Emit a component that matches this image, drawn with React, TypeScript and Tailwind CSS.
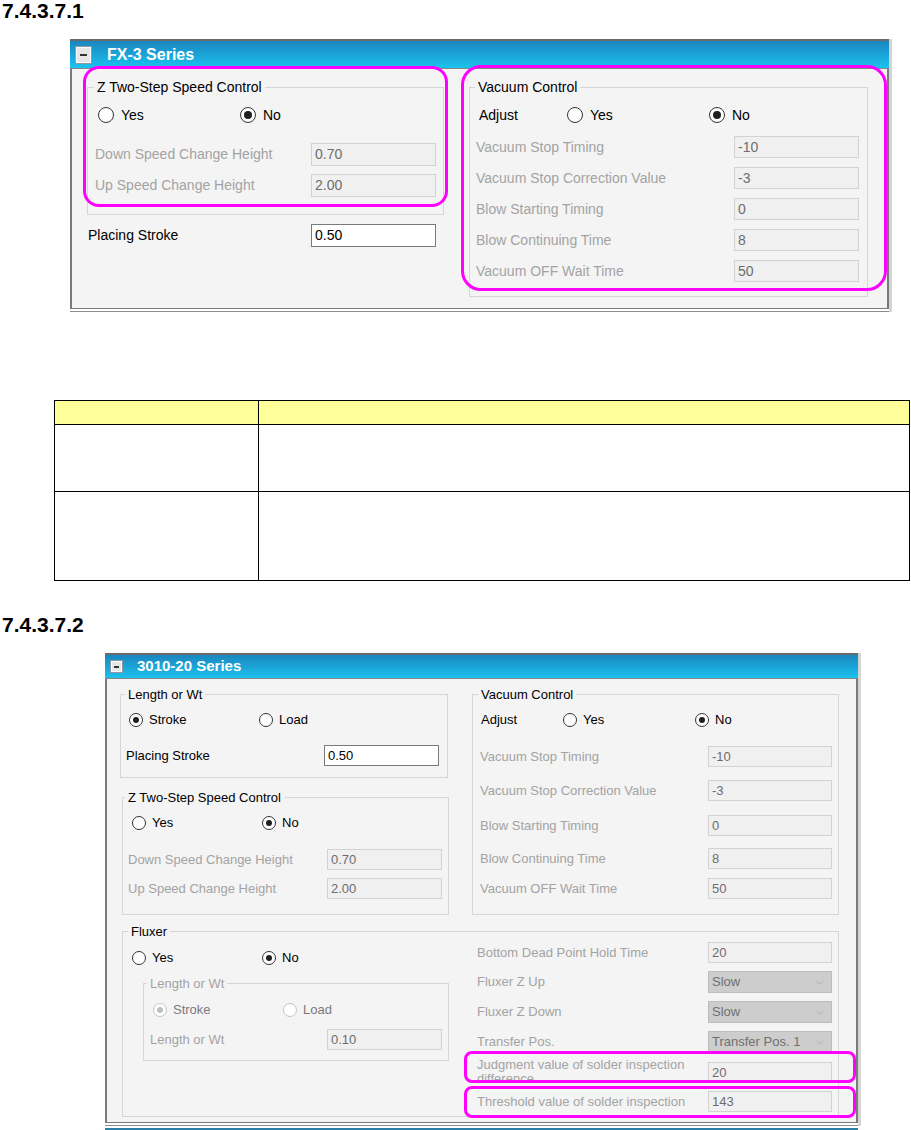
import { ChevronDown } from 'lucide-react'

const GRAY = 'text-[#a3a3a3]'

function Radio({ checked, small, disabled }: { checked?: boolean; small?: boolean; disabled?: boolean }) {
  const ring = small ? 'w-[14px] h-[14px]' : 'w-[16px] h-[16px]'
  const dot = small ? 'w-[6px] h-[6px]' : 'w-[8px] h-[8px]'
  return (
    <span className={`${ring} ${disabled ? 'border-[#c4c4c4]' : 'border-[#333]'} flex shrink-0 items-center justify-center rounded-full border bg-white`}>
      {checked && <span className={`${dot} rounded-full ${disabled ? 'bg-[#bdbdbd]' : 'bg-[#1f1f1f]'}`} />}
    </span>
  )
}

function Opt({ label, checked, small, disabled, cls, labelCls }: { label: string; checked?: boolean; small?: boolean; disabled?: boolean; cls?: string; labelCls?: string }) {
  return (
    <div className={`flex items-center ${small ? 'gap-[6px]' : 'gap-[7px]'} ${cls ?? ''}`}>
      <Radio checked={checked} small={small} disabled={disabled} />
      <span className={labelCls}>{label}</span>
    </div>
  )
}

function Box({ v, cls, on }: { v: string; cls: string; on?: boolean }) {
  return (
    <div className={`${cls} flex shrink-0 items-center border pl-[3px] ${on ? 'border-[#7a7a7a] bg-white text-black' : 'border-[#d2d2d2] bg-[#f0f0f0] text-[#6d6d6d]'}`}>
      {v}
    </div>
  )
}

function Sel({ v }: { v: string }) {
  return (
    <div className="flex h-[22px] w-[124px] shrink-0 items-center justify-between border border-[#bdbdbd] bg-[#cdcdcd] pl-[3px] pr-[5px] text-[#707070]">
      <span className="whitespace-nowrap">{v}</span>
      <ChevronDown size={13} strokeWidth={1} className="text-[#9a9a9a]" />
    </div>
  )
}

function Minus({ small }: { small?: boolean }) {
  return (
    <div className={`${small ? 'ml-[5px] h-[13px] w-[13px]' : 'ml-[5px] h-[18px] w-[17px]'} flex items-center justify-center border border-[#8c9aa3] bg-[#e6e6e6] shadow-[inset_0_0_0_1px_#fafafa]`}>
      <span className={`${small ? 'w-[5px]' : 'w-[7px]'} h-[2px] bg-[#333]`} />
    </div>
  )
}

function Panel1() {
  const vac = [
    ['Vacuum Stop Timing', '-10', 'mt-[13px]'],
    ['Vacuum Stop Correction Value', '-3', 'mt-[9px]'],
    ['Blow Starting Timing', '0', 'mt-[9px]'],
    ['Blow Continuing Time', '8', 'mt-[9px]'],
    ['Vacuum OFF Wait Time', '50', 'mt-[9px]'],
  ]
  return (
    <div className="ml-[70px] mt-[17px] flex w-[822px]">
      <div className="relative w-[819px] border-b border-[#8f8f8f] pb-[2px]">
        <div className="flex h-[30px] items-center border-t-2 border-b border-t-[#6b6b6b] border-b-[#858585] bg-linear-to-b from-[#1a86bf] to-[#1cc2ef]">
          <Minus />
          <span className="ml-[15px] text-[16px] font-bold text-white">FX-3 Series</span>
        </div>
        <div className="flex h-[240px] items-start border-x-2 border-b border-[#7a7a7a] bg-[#f4f4f4] pt-[10px] text-[14px] text-black">
          <div className="w-[372px] shrink-0">
            <fieldset className="ml-[15px] w-[357px] border border-[#d6d6d6] pb-[17px]">
              <legend className="ml-[6px] px-[3px] leading-[16px]">Z Two-Step Speed Control</legend>
              <div className="mt-[12px] flex h-[16px] items-center pl-[10px] leading-[16px]">
                <Opt label="Yes" cls="w-[142px]" />
                <Opt label="No" checked />
              </div>
              <div className="mt-[20px] flex h-[23px] items-center pl-[7px]">
                <span className={`w-[216px] ${GRAY}`}>Down Speed Change Height</span>
                <Box v="0.70" cls="h-[23px] w-[125px]" />
              </div>
              <div className="mt-[8px] flex h-[23px] items-center pl-[7px]">
                <span className={`w-[216px] ${GRAY}`}>Up Speed Change Height</span>
                <Box v="2.00" cls="h-[23px] w-[125px]" />
              </div>
            </fieldset>
            <div className="ml-[16px] mt-[9px] flex h-[23px] items-center">
              <span className="w-[223px]">Placing Stroke</span>
              <Box v="0.50" cls="h-[23px] w-[125px]" on />
            </div>
          </div>
          <fieldset className="ml-[25px] w-[399px] border border-[#d6d6d6] pb-[14px]">
            <legend className="ml-[5px] px-[3px] leading-[16px]">Vacuum Control</legend>
            <div className="mt-[12px] flex h-[16px] items-center pl-[9px]">
              <span className="w-[88px]">Adjust</span>
              <Opt label="Yes" cls="w-[142px]" />
              <Opt label="No" checked />
            </div>
            {vac.map(([l, v, mt]) => (
              <div key={l} className={`${mt} flex h-[22px] items-center pl-[6px]`}>
                <span className={`w-[258px] ${GRAY}`}>{l}</span>
                <Box v={v} cls="h-[22px] w-[125px]" />
              </div>
            ))}
          </fieldset>
        </div>
        <div className="pointer-events-none absolute left-[13px] top-[27px] h-[141px] w-[365px] rounded-[16px] border-[3px] border-[#ff00ff]" />
        <div className="pointer-events-none absolute left-[391px] top-[26px] h-[226px] w-[426px] rounded-[20px] border-[3px] border-[#ff00ff]" />
      </div>
      <div className="w-[3px] bg-[#d4d4d4]" />
    </div>
  )
}

function Panel2() {
  const vac = [
    ['Vacuum Stop Timing', '-10', 'mt-[19px]'],
    ['Vacuum Stop Correction Value', '-3', 'mt-[13px]'],
    ['Blow Starting Timing', '0', 'mt-[14px]'],
    ['Blow Continuing Time', '8', 'mt-[12px]'],
    ['Vacuum OFF Wait Time', '50', 'mt-[9px]'],
  ]
  return (
    <div className="ml-[105px] mt-[17px] flex w-[756px]">
      <div className="relative w-[753px] border-b border-[#8f8f8f] pb-[2px]">
        <div className="flex h-[26px] items-center border-t-2 border-b border-t-[#6b6b6b] border-b-[#858585] bg-linear-to-b from-[#1a86bf] to-[#1cc2ef]">
          <Minus small />
          <span className="ml-[14px] text-[15px] font-bold text-white">3010-20 Series</span>
        </div>
        <div className="h-[444px] border-x-2 border-b border-[#7a7a7a] bg-[#f4f4f4] pt-[8px] text-[13px] text-black">
          <div className="flex items-start">
            <div className="w-[342px] shrink-0">
              <fieldset className="ml-[13px] w-[328px] border border-[#d6d6d6] pb-[11px]">
                <legend className="ml-[4px] px-[3px] leading-[15px]">Length or Wt</legend>
                <div className="mt-[11px] flex h-[14px] items-center pl-[8px]">
                  <Opt label="Stroke" checked small cls="w-[130px]" />
                  <Opt label="Load" small />
                </div>
                <div className="mt-[18px] flex h-[21px] items-center pl-[5px]">
                  <span className="w-[198px]">Placing Stroke</span>
                  <Box v="0.50" cls="h-[21px] w-[115px]" on />
                </div>
              </fieldset>
              <fieldset className="ml-[15px] mt-[12px] w-[327px] border border-[#d6d6d6] pb-[15px]">
                <legend className="ml-[2px] px-[3px] leading-[15px]">Z Two-Step Speed Control</legend>
                <div className="mt-[11px] flex h-[14px] items-center pl-[9px]">
                  <Opt label="Yes" small cls="w-[130px]" />
                  <Opt label="No" checked small />
                </div>
                <div className="mt-[19px] flex h-[21px] items-center pl-[5px]">
                  <span className={`w-[199px] ${GRAY}`}>Down Speed Change Height</span>
                  <Box v="0.70" cls="h-[21px] w-[115px]" />
                </div>
                <div className="mt-[8px] flex h-[21px] items-center pl-[5px]">
                  <span className={`w-[199px] ${GRAY}`}>Up Speed Change Height</span>
                  <Box v="2.00" cls="h-[21px] w-[115px]" />
                </div>
              </fieldset>
            </div>
            <fieldset className="ml-[23px] w-[367px] border border-[#d6d6d6] pb-[15px]">
              <legend className="ml-[5px] px-[3px] leading-[15px]">Vacuum Control</legend>
              <div className="mt-[11px] flex h-[14px] items-center pl-[8px]">
                <span className="w-[82px]">Adjust</span>
                <Opt label="Yes" small cls="w-[132px]" />
                <Opt label="No" checked small />
              </div>
              {vac.map(([l, v, mt]) => (
                <div key={l} className={`${mt} flex h-[21px] items-center pl-[7px]`}>
                  <span className={`w-[228px] ${GRAY}`}>{l}</span>
                  <Box v={v} cls="h-[21px] w-[124px]" />
                </div>
              ))}
            </fieldset>
          </div>

          <fieldset className="ml-[15px] mt-[9px] w-[717px] border border-[#d6d6d6] pb-[4px]">
            <legend className="ml-[5px] px-[3px] leading-[15px]">Fluxer</legend>
            <div className="flex items-start">
              <div className="w-[354px] shrink-0">
                <div className="mt-[12px] flex h-[14px] items-center pl-[9px]">
                  <Opt label="Yes" small cls="w-[130px]" />
                  <Opt label="No" checked small />
                </div>
                <fieldset className="ml-[20px] mt-[11px] w-[306px] border border-[#d6d6d6] pb-[10px]">
                  <legend className={`ml-[3px] px-[3px] leading-[15px] ${GRAY}`}>Length or Wt</legend>
                  <div className="mt-[12px] flex h-[14px] items-center pl-[9px]">
                    <Opt label="Stroke" checked small disabled cls="w-[130px]" labelCls="text-[#7a7a7a]" />
                    <Opt label="Load" small disabled labelCls="text-[#7a7a7a]" />
                  </div>
                  <div className="mt-[12px] flex h-[21px] items-center pl-[6px]">
                    <span className={`w-[177px] ${GRAY}`}>Length or Wt</span>
                    <Box v="0.10" cls="h-[21px] w-[115px]" />
                  </div>
                </fieldset>
              </div>
              <div className="w-[360px]">
                <div className="mt-[3px] flex h-[21px] items-center">
                  <span className={`w-[231px] ${GRAY}`}>Bottom Dead Point Hold Time</span>
                  <Box v="20" cls="h-[21px] w-[124px]" />
                </div>
                <div className="mt-[8px] flex h-[22px] items-center">
                  <span className={`w-[231px] ${GRAY}`}>Fluxer Z Up</span>
                  <Sel v="Slow" />
                </div>
                <div className="mt-[8px] flex h-[22px] items-center">
                  <span className={`w-[231px] ${GRAY}`}>Fluxer Z Down</span>
                  <Sel v="Slow" />
                </div>
                <div className="mt-[8px] flex h-[22px] items-center">
                  <span className={`w-[231px] ${GRAY}`}>Transfer Pos.</span>
                  <Sel v="Transfer Pos. 1" />
                </div>
                <div className="mt-[9px] flex h-[21px] items-start">
                  <span className={`-mt-[4px] w-[231px] leading-[14px] ${GRAY}`}>Judgment value of solder inspection difference</span>
                  <Box v="20" cls="h-[21px] w-[124px]" />
                </div>
                <div className="mt-[8px] flex h-[21px] items-center">
                  <span className={`w-[231px] ${GRAY}`}>Threshold value of solder inspection</span>
                  <Box v="143" cls="h-[21px] w-[124px]" />
                </div>
              </div>
            </div>
          </fieldset>
        </div>
        <div className="pointer-events-none absolute left-[359px] top-[398px] h-[32px] w-[392px] rounded-[8px] border-[3px] border-[#ff00ff]" />
        <div className="pointer-events-none absolute left-[359px] top-[433px] h-[32px] w-[392px] rounded-[8px] border-[3px] border-[#ff00ff]" />
      </div>
      <div className="w-[3px] bg-[#d4d4d4]" />
    </div>
  )
}

export default function App() {
  return (
    <div className="relative h-[1130px] w-[911px] overflow-hidden bg-white [font-family:'Liberation_Sans',Arial,sans-serif]">
      <h2 className="pl-[2px] text-[21px] font-bold leading-[22px] text-black">7.4.3.7.1</h2>
      <Panel1 />

      <div className="ml-[54px] mt-[88px] w-[856px] border border-black">
        <div className="flex h-[24px] border-b border-black bg-[#ffff99]">
          <div className="w-[204px] border-r border-black" />
          <div className="flex-1" />
        </div>
        <div className="flex h-[67px] border-b border-black">
          <div className="w-[204px] border-r border-black" />
          <div className="flex-1" />
        </div>
        <div className="flex h-[88px]">
          <div className="w-[204px] border-r border-black" />
          <div className="flex-1" />
        </div>
      </div>

      <h2 className="mt-[33px] pl-[2px] text-[21px] font-bold leading-[22px] text-black">7.4.3.7.2</h2>
      <Panel2 />
      <div className="ml-[105px] mt-[2px] h-[2px] w-[753px] bg-[#2c7ea6]" />
    </div>
  )
}
